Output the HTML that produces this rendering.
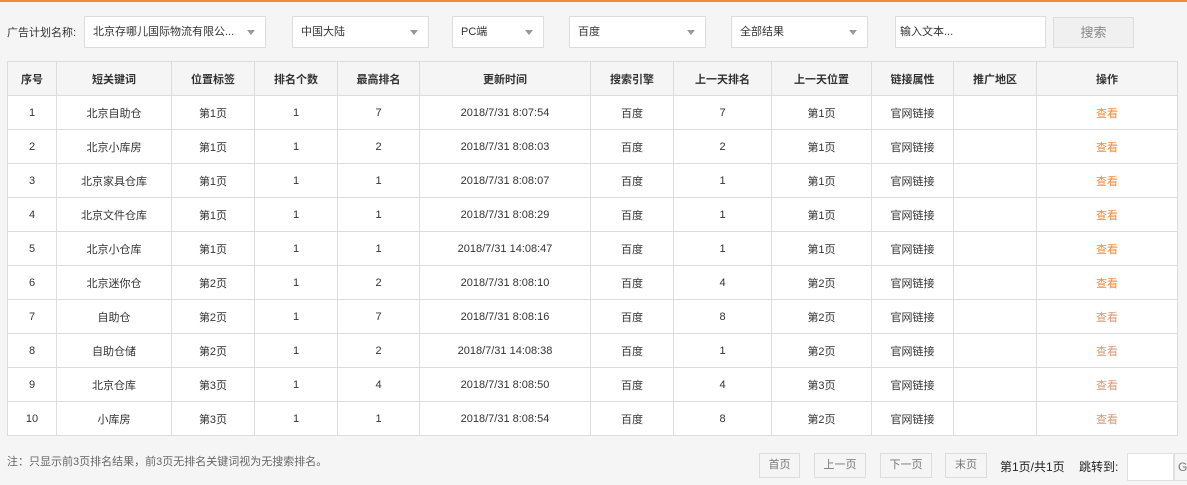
<!DOCTYPE html>
<html><head><meta charset="utf-8"><style>
*{margin:0;padding:0;box-sizing:border-box}
body{width:1187px;height:485px;background:#f5f5f5;font-family:"Liberation Sans","Noto Sans CJK SC",sans-serif;font-size:12px;color:#333;position:relative;overflow:hidden}
.a{position:absolute}
.sel{position:absolute;top:16px;height:32px;background:#fff;border:1px solid #dcdcdc;padding:0 8px;line-height:30px;font-size:11px}
.sel:after{content:"";position:absolute;right:10px;top:13px;border:4px solid transparent;border-top:5px solid #999}
.inp:after{display:none}
table{position:absolute;left:7px;top:61px;border-collapse:collapse;background:#fff;table-layout:fixed}
td,th{border:1px solid #dcdcdc;height:34px;text-align:center;font-size:11px;color:#333}
th{background:#f5f5f5;font-weight:bold}
.o{color:#f08a3c}.m{color:#d49a78}
.btn{position:absolute;top:453px;height:25px;border:1px solid #dcdcdc;background:#f5f5f5;color:#777;line-height:23px;text-align:center;font-size:11px}
</style></head><body>
<div class="a" style="left:0;top:0;width:1187px;height:2px;background:#f08a3c"></div>
<div class="a" style="left:7px;top:24px;font-size:11px">广告计划名称:</div>
<div class="sel" style="left:84px;width:182px">北京存哪儿国际物流有限公...</div>
<div class="sel" style="left:292px;width:137px">中国大陆</div>
<div class="sel" style="left:452px;width:92px">PC端</div>
<div class="sel" style="left:569px;width:137px">百度</div>
<div class="sel" style="left:731px;width:137px">全部结果</div>
<div class="sel inp" style="left:895px;width:151px;padding-left:4px">输入文本...</div>
<div class="a" style="left:1053px;top:17px;width:81px;height:31px;border:1px solid #dcdcdc;background:#f0f0f0;color:#888;text-align:center;line-height:29px;font-size:13px">搜索</div>
<table>
<colgroup><col style="width:49px"><col style="width:115px"><col style="width:83px"><col style="width:83px"><col style="width:82px"><col style="width:171px"><col style="width:83px"><col style="width:98px"><col style="width:100px"><col style="width:82px"><col style="width:83px"><col style="width:141px"></colgroup>
<tr><th>序号</th><th>短关键词</th><th>位置标签</th><th>排名个数</th><th>最高排名</th><th>更新时间</th><th>搜索引擎</th><th>上一天排名</th><th>上一天位置</th><th>链接属性</th><th>推广地区</th><th>操作</th></tr>
<tr><td>1</td><td>北京自助仓</td><td>第1页</td><td>1</td><td>7</td><td>2018/7/31 8:07:54</td><td>百度</td><td>7</td><td>第1页</td><td>官网链接</td><td></td><td class="o">查看</td></tr>
<tr><td>2</td><td>北京小库房</td><td>第1页</td><td>1</td><td>2</td><td>2018/7/31 8:08:03</td><td>百度</td><td>2</td><td>第1页</td><td>官网链接</td><td></td><td class="o">查看</td></tr>
<tr><td>3</td><td>北京家具仓库</td><td>第1页</td><td>1</td><td>1</td><td>2018/7/31 8:08:07</td><td>百度</td><td>1</td><td>第1页</td><td>官网链接</td><td></td><td class="o">查看</td></tr>
<tr><td>4</td><td>北京文件仓库</td><td>第1页</td><td>1</td><td>1</td><td>2018/7/31 8:08:29</td><td>百度</td><td>1</td><td>第1页</td><td>官网链接</td><td></td><td class="o">查看</td></tr>
<tr><td>5</td><td>北京小仓库</td><td>第1页</td><td>1</td><td>1</td><td>2018/7/31 14:08:47</td><td>百度</td><td>1</td><td>第1页</td><td>官网链接</td><td></td><td class="o">查看</td></tr>
<tr><td>6</td><td>北京迷你仓</td><td>第2页</td><td>1</td><td>2</td><td>2018/7/31 8:08:10</td><td>百度</td><td>4</td><td>第2页</td><td>官网链接</td><td></td><td class="o">查看</td></tr>
<tr><td>7</td><td>自助仓</td><td>第2页</td><td>1</td><td>7</td><td>2018/7/31 8:08:16</td><td>百度</td><td>8</td><td>第2页</td><td>官网链接</td><td></td><td class="m">查看</td></tr>
<tr><td>8</td><td>自助仓储</td><td>第2页</td><td>1</td><td>2</td><td>2018/7/31 14:08:38</td><td>百度</td><td>1</td><td>第2页</td><td>官网链接</td><td></td><td class="m">查看</td></tr>
<tr><td>9</td><td>北京仓库</td><td>第3页</td><td>1</td><td>4</td><td>2018/7/31 8:08:50</td><td>百度</td><td>4</td><td>第3页</td><td>官网链接</td><td></td><td class="m">查看</td></tr>
<tr><td>10</td><td>小库房</td><td>第3页</td><td>1</td><td>1</td><td>2018/7/31 8:08:54</td><td>百度</td><td>8</td><td>第2页</td><td>官网链接</td><td></td><td class="m">查看</td></tr>
</table>
<div class="a" style="left:7px;top:453px;font-size:11px;color:#666">注：只显示前3页排名结果，前3页无排名关键词视为无搜索排名。</div>
<div class="btn" style="left:759px;width:41px">首页</div>
<div class="btn" style="left:814px;width:52px">上一页</div>
<div class="btn" style="left:880px;width:52px">下一页</div>
<div class="btn" style="left:945px;width:42px">末页</div>
<div class="a" style="left:1000px;top:458px;font-size:12px;color:#222">第1页/共1页</div>
<div class="a" style="left:1079px;top:458px;font-size:12px;color:#222">跳转到:</div>
<div class="a" style="left:1127px;top:453px;width:47px;height:28px;background:#fff;border:1px solid #e0e0e0"></div>
<div class="a" style="left:1174px;top:453px;width:20px;height:28px;border:1px solid #e0e0e0;background:#f5f5f5;color:#777;line-height:26px;padding-left:3px">G</div>
</body></html>
